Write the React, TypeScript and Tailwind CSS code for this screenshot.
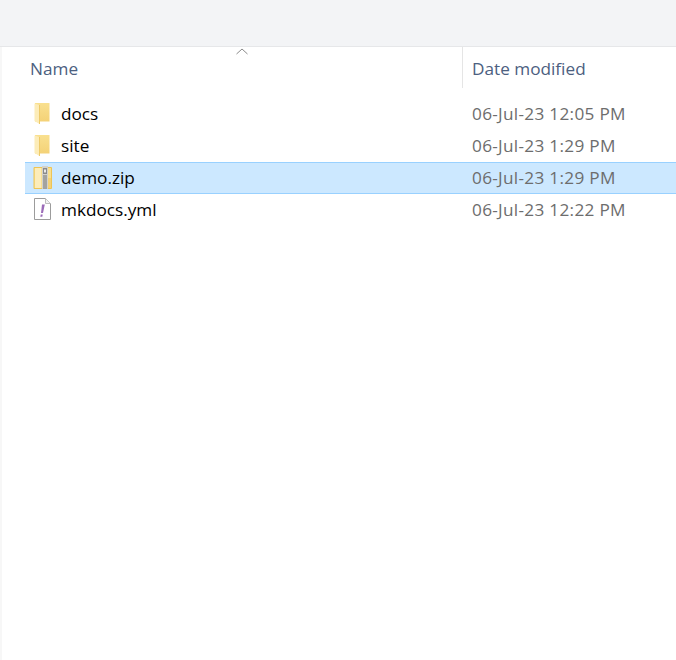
import React from 'react'

function Folder() {
  return (
    <svg width="20" height="24" viewBox="0 0 20 24" className="block">
      <defs>
        <linearGradient id="back" x1="0" y1="0" x2="0" y2="1">
          <stop offset="0" stopColor="#f9e08f" />
          <stop offset="1" stopColor="#f4d277" />
        </linearGradient>
      </defs>
      <path d="M2 1h14.5v18.5H2z" fill="url(#back)" />
      <path d="M1.5 1.5 6.5 3v19l-5-3z" fill="#fcecb8" />
      <path d="M6.5 3v19" stroke="#efcb6a" strokeWidth="1" />
    </svg>
  )
}

function ZipIcon() {
  return (
    <svg width="20" height="24" viewBox="0 0 20 24" className="block">
      <path d="M1 1.5h17.5v21H1z" fill="#f9e08f" stroke="#eec455" />
      <path d="M2 2h6v20H2z" fill="#fcecb8" />
      <path d="M14.5 12h3.500v10h-3.500z" fill="#f4d277" />
      <path d="M9 0h6v23H9z" fill="#d2d2cc" />
      <path d="M10 2h4v6h-4z" fill="#8a8a8a" />
      <path d="M11 3.500h2v3h-2z" fill="#eaeaea" />
      <path d="M10 10h4M10 12h4M10 14h4M10 16h4M10 18h4M10 20h4M10 22h4" stroke="#757575" strokeWidth="1" />
    </svg>
  )
}

function YmlIcon() {
  return (
    <svg width="20" height="24" viewBox="0 0 20 24" className="block">
      <path d="M1.500 .5h11l5 5v16h-16z" fill="#fff" stroke="#9c9c9c" />
      <path d="M12.500 .5v5h5" fill="#f2f2f2" stroke="#bdbdbd" />
      <path d="M9 6.500h2.800l-1.800 8.500H8z" fill="#9b6bb8" />
      <path d="M7.700 16.500h2l-.4 2.200h-2z" fill="#9b6bb8" />
    </svg>
  )
}

const files = [
  { name: 'docs', date: '06-Jul-23 12:05 PM', icon: <Folder /> },
  { name: 'site', date: '06-Jul-23 1:29 PM', icon: <Folder /> },
  { name: 'demo.zip', date: '06-Jul-23 1:29 PM', icon: <ZipIcon />, selected: true },
  { name: 'mkdocs.yml', date: '06-Jul-23 12:22 PM', icon: <YmlIcon /> },
]

export default function App() {
  return (
    <div className="h-[660px] w-[676px] overflow-hidden bg-white font-['Open_Sans','Noto_Sans',sans-serif] text-[17.2px]">
      <div className="h-[47px] border-b border-[#e6e7e9] bg-[#f3f4f6]" />
      <div className="h-[613px] border-l-2 border-[#f7f7f7] pl-[23px]">
        <div className="relative flex h-[41px]">
          <svg width="12" height="7" viewBox="0 0 12 7" className="absolute left-[211px] top-px">
            <path d="M.5 6 6 1l5.500 5" fill="none" stroke="#8a8a8a" />
          </svg>
          <div className="flex w-[437px] items-center pt-[3px] pl-[5px] text-[#4c607f]">Name</div>
          <div className="flex flex-1 items-center border-l border-[#e5e5e5] pt-[3px] pl-[9px] text-[#4c607f]">Date modified</div>
        </div>
        <div className="mt-[10px]">
          {files.map(f => (
            <div
              key={f.name}
              className={'flex h-[32px] items-center ' + (f.selected ? 'border-y border-[#99d1ff] bg-[#cce8ff]' : '')}
            >
              <div className="w-[36px] pl-[8px]">{f.icon}</div>
              <div className="w-[402px] text-black">{f.name}</div>
              <div className="pl-[9px] tracking-[0.3px] text-[#6d6d6d]">{f.date}</div>
            </div>
          ))}
        </div>
      </div>
    </div>
  )
}
